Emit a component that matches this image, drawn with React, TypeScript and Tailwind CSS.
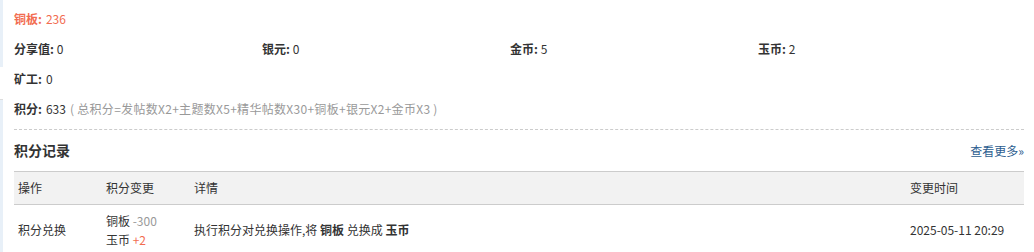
import React from 'react';

const stats = [
    { label: '分享值', value: '0' },
    { label: '银元', value: '0' },
    { label: '金币', value: '5' },
    { label: '玉币', value: '2' },
];

export default function App() {
    return (
        <div className="flex w-[1034px] h-[252px] bg-white text-[12px] text-[#333] overflow-hidden" style={{ fontFamily: '"Microsoft YaHei", "Noto Sans CJK SC", "Noto Sans", sans-serif' }}>
            <div className="flex flex-col w-[3px] shrink-0">
                <div className="h-[67px] bg-[#e8f0f8]" />
                <div className="h-[33px] bg-white border-b border-[#ddd]" />
                <div className="flex-1 bg-[#e8f0f8]" />
            </div>
            <div className="flex-1 pl-[11px] pr-[10px]">
                <div className="h-[38px] flex items-center text-[#f26c50]">
                    <span className="font-bold">铜板:</span>
                    <span className="ml-1">236</span>
                </div>
                <ul className="flex h-[22px] items-center">
                    {stats.map((s) => (
                        <li key={s.label} className="w-[248px]">
                            <span className="font-bold">{s.label}:</span> {s.value}
                        </li>
                    ))}
                </ul>
                <div className="h-[38px] flex items-center">
                    <span className="font-bold">矿工:</span>
                    <span className="ml-1">0</span>
                </div>
                <div className="h-[22px] flex items-center">
                    <span className="font-bold">积分:</span>
                    <span className="ml-1">633</span>
                    <span className="ml-1 text-[#999] tracking-[0.3px]">( 总积分=发帖数X2+主题数X5+精华帖数X30+铜板+银元X2+金币X3 )</span>
                </div>
                <div className="mt-[9px] border-t border-dashed border-[#ccc]" />
                <div className="flex justify-between items-center h-[41px]">
                    <h3 className="text-[14px] font-bold">积分记录</h3>
                    <a className="text-[#2c5d8f]">查看更多»</a>
                </div>
                <table className="w-full border-collapse">
                    <thead>
                        <tr className="bg-[#f2f2f2] h-[33px] border-t border-b border-[#ccc] text-left">
                            <th className="font-normal pl-[4px] w-[92px]">操作</th>
                            <th className="font-normal w-[88px]">积分变更</th>
                            <th className="font-normal">详情</th>
                            <th className="font-normal w-[114px]">变更时间</th>
                        </tr>
                    </thead>
                    <tbody>
                        <tr className="h-[50px]">
                            <td className="pl-[4px]">积分兑换</td>
                            <td className="leading-[19px]">
                                <div>铜板 <span className="text-[#999]">-300</span></div>
                                <div>玉币 <span className="text-[#f26c50]">+2</span></div>
                            </td>
                            <td>执行积分对兑换操作,将 <span className="font-bold">铜板</span> 兑换成 <span className="font-bold">玉币</span></td>
                            <td>2025-05-11 20:29</td>
                        </tr>
                    </tbody>
                </table>
            </div>
        </div>
    );
}
